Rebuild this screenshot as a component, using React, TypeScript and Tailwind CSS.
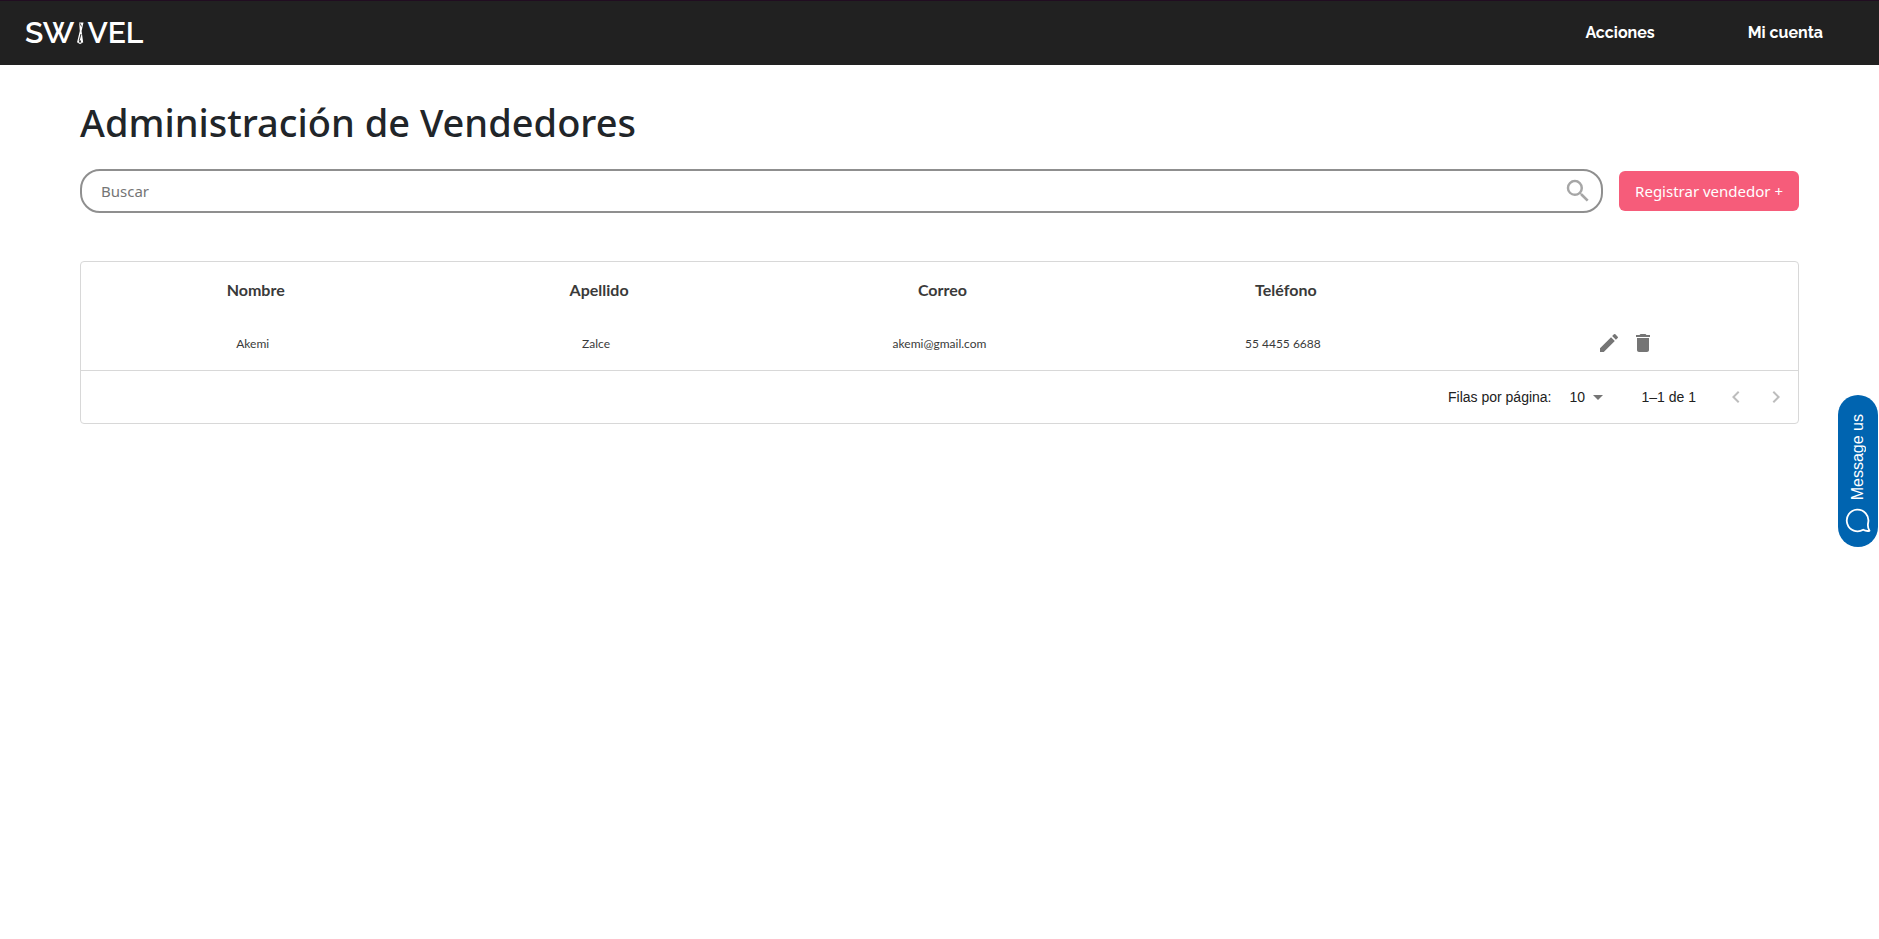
import { useState } from "react";
import {
  MdArrowDropDown,
  MdChevronLeft,
  MdChevronRight,
  MdDelete,
  MdEdit,
  MdSearch,
} from "react-icons/md";

const sellers = [
  { nombre: "Akemi", apellido: "Zalce", correo: "akemi@gmail.com", telefono: "55 4455 6688" },
];

const columns = ["Nombre", "Apellido", "Correo", "Teléfono"];

function Logo() {
  return (
    <a
      href="#"
      aria-label="Swivel"
      className="flex items-center pl-px font-['Raleway','Lato',sans-serif] text-[30px] leading-8 font-semibold text-white"
    >
      <span>SW</span>
      <svg width="13" height="24" viewBox="0 0 13 24" className="shrink-0" aria-hidden="true">
        <path d="M5.200 1.500h4.300L7.600 10l1.600 11.500H3L5.800 10z" fill="#fff" />
        <path d="M6 2.300l1.600 3.200" fill="none" stroke="#212121" strokeWidth=".8" />
        <path d="M7 13L5.200 19.500" fill="none" stroke="#212121" strokeWidth=".9" />
        <path d="M3.800 21.300q2.200 2.600 4.600 0" fill="none" stroke="#fff" strokeWidth="1" />
        <circle cx="6" cy="20.300" r="1" fill="#212121" />
      </svg>
      <span>VEL</span>
    </a>
  );
}

function Navbar() {
  return (
    <header className="flex h-[65px] items-center justify-between border-t border-[#210d21] bg-[#212121] pr-14 pl-6">
      <Logo />
      <nav className="flex gap-[93px] font-['Raleway','Lato',sans-serif] text-base font-bold text-white">
        <a href="#acciones">Acciones</a>
        <a href="#cuenta">Mi cuenta</a>
      </nav>
    </header>
  );
}

function SearchBar() {
  const [query, setQuery] = useState("");
  return (
    <div className="flex items-center gap-4">
      <div className="flex h-11 flex-1 items-center rounded-[20px] border-2 border-[#8f8f8f] pr-2 pl-[19px]">
        <input
          type="text"
          aria-label="Buscar"
          placeholder="Buscar"
          value={query}
          onChange={(e) => setQuery(e.target.value)}
          className="min-w-0 flex-1 bg-transparent text-[15px] text-[#212529] outline-none placeholder:text-[#757575]"
        />
        <button type="button" aria-label="Iniciar búsqueda" className="text-[#a6a6a6]">
          <MdSearch size={30} />
        </button>
      </div>
      <button type="button" className="h-10 rounded-md bg-[#f65c7a] px-4 text-[15px] text-white">
        Registrar vendedor +
      </button>
    </div>
  );
}

function Pagination() {
  return (
    <div className="flex h-[53px] items-center justify-end border-t border-[#d8d8d8] pr-0.5 font-['Liberation_Sans',Arial,sans-serif] text-sm text-[#212121]">
      <label htmlFor="rows">Filas por página:</label>
      <div className="relative mr-9 ml-[18px] flex items-center">
        <select id="rows" defaultValue="10" className="w-9 appearance-none bg-transparent">
          <option>10</option>
          <option>25</option>
          <option>50</option>
        </select>
        <MdArrowDropDown
          size={24}
          className="pointer-events-none absolute -right-1 text-[#757575]"
        />
      </div>
      <span>1–1 de 1</span>
      <div className="ml-5 flex text-[#bdbdbd]">
        <button type="button" aria-label="Página anterior" className="p-2">
          <MdChevronLeft size={24} />
        </button>
        <button type="button" aria-label="Página siguiente" className="p-2">
          <MdChevronRight size={24} />
        </button>
      </div>
    </div>
  );
}

function SellersTable() {
  return (
    <section className="rounded border border-[#d8d8d8] font-['Lato',sans-serif] text-[#3a3a3a]">
      <table className="w-full table-fixed text-center">
        <thead>
          <tr className="h-14">
            {columns.map((c) => (
              <th key={c} scope="col" className="pl-1.5 text-base font-bold">
                {c}
              </th>
            ))}
            <th scope="col" aria-label="Opciones" />
          </tr>
        </thead>
        <tbody>
          {sellers.map((s) => (
            <tr key={s.correo} className="h-13 text-xs">
              <td>{s.nombre}</td>
              <td>{s.apellido}</td>
              <td>{s.correo}</td>
              <td>{s.telefono}</td>
              <td>
                <div className="flex justify-center gap-[10px] pb-0.5 text-[#757575]">
                  <button type="button" aria-label="Editar">
                    <MdEdit size={24} />
                  </button>
                  <button type="button" aria-label="Eliminar">
                    <MdDelete size={24} />
                  </button>
                </div>
              </td>
            </tr>
          ))}
        </tbody>
      </table>
      <Pagination />
    </section>
  );
}

function ChatButton() {
  return (
    <button
      type="button"
      className="fixed top-[395px] right-px flex h-38 w-10 flex-col items-center justify-end gap-[7px] rounded-full bg-[#0064b0] pb-3.5 font-['Liberation_Sans',Arial,sans-serif] text-base text-white"
    >
      <span className="rotate-180 [writing-mode:vertical-rl]">Message us</span>
      <svg width="26" height="26" viewBox="0 0 26 26" fill="none" stroke="#fff" strokeWidth="1.800" strokeLinejoin="round" aria-hidden="true">
        <path d="M24.500 23.800c-2 .4-4.200.2-6.300-1.100A10.800 10.800 0 1 1 23.200 15.500c-.6 2.800-.5 5.600 1.300 8.300z" />
      </svg>
    </button>
  );
}

export default function App() {
  return (
    <div className="min-h-screen bg-white font-['Segoe_UI','Noto_Sans',sans-serif] text-[#212529]">
      <Navbar />
      <main className="px-20 pt-[33px]">
        <h1 className="mb-[23px] text-[38px] leading-12 font-medium">
          Administración de Vendedores
        </h1>
        <SearchBar />
        <div className="mt-12">
          <SellersTable />
        </div>
      </main>
      <ChatButton />
    </div>
  );
}
